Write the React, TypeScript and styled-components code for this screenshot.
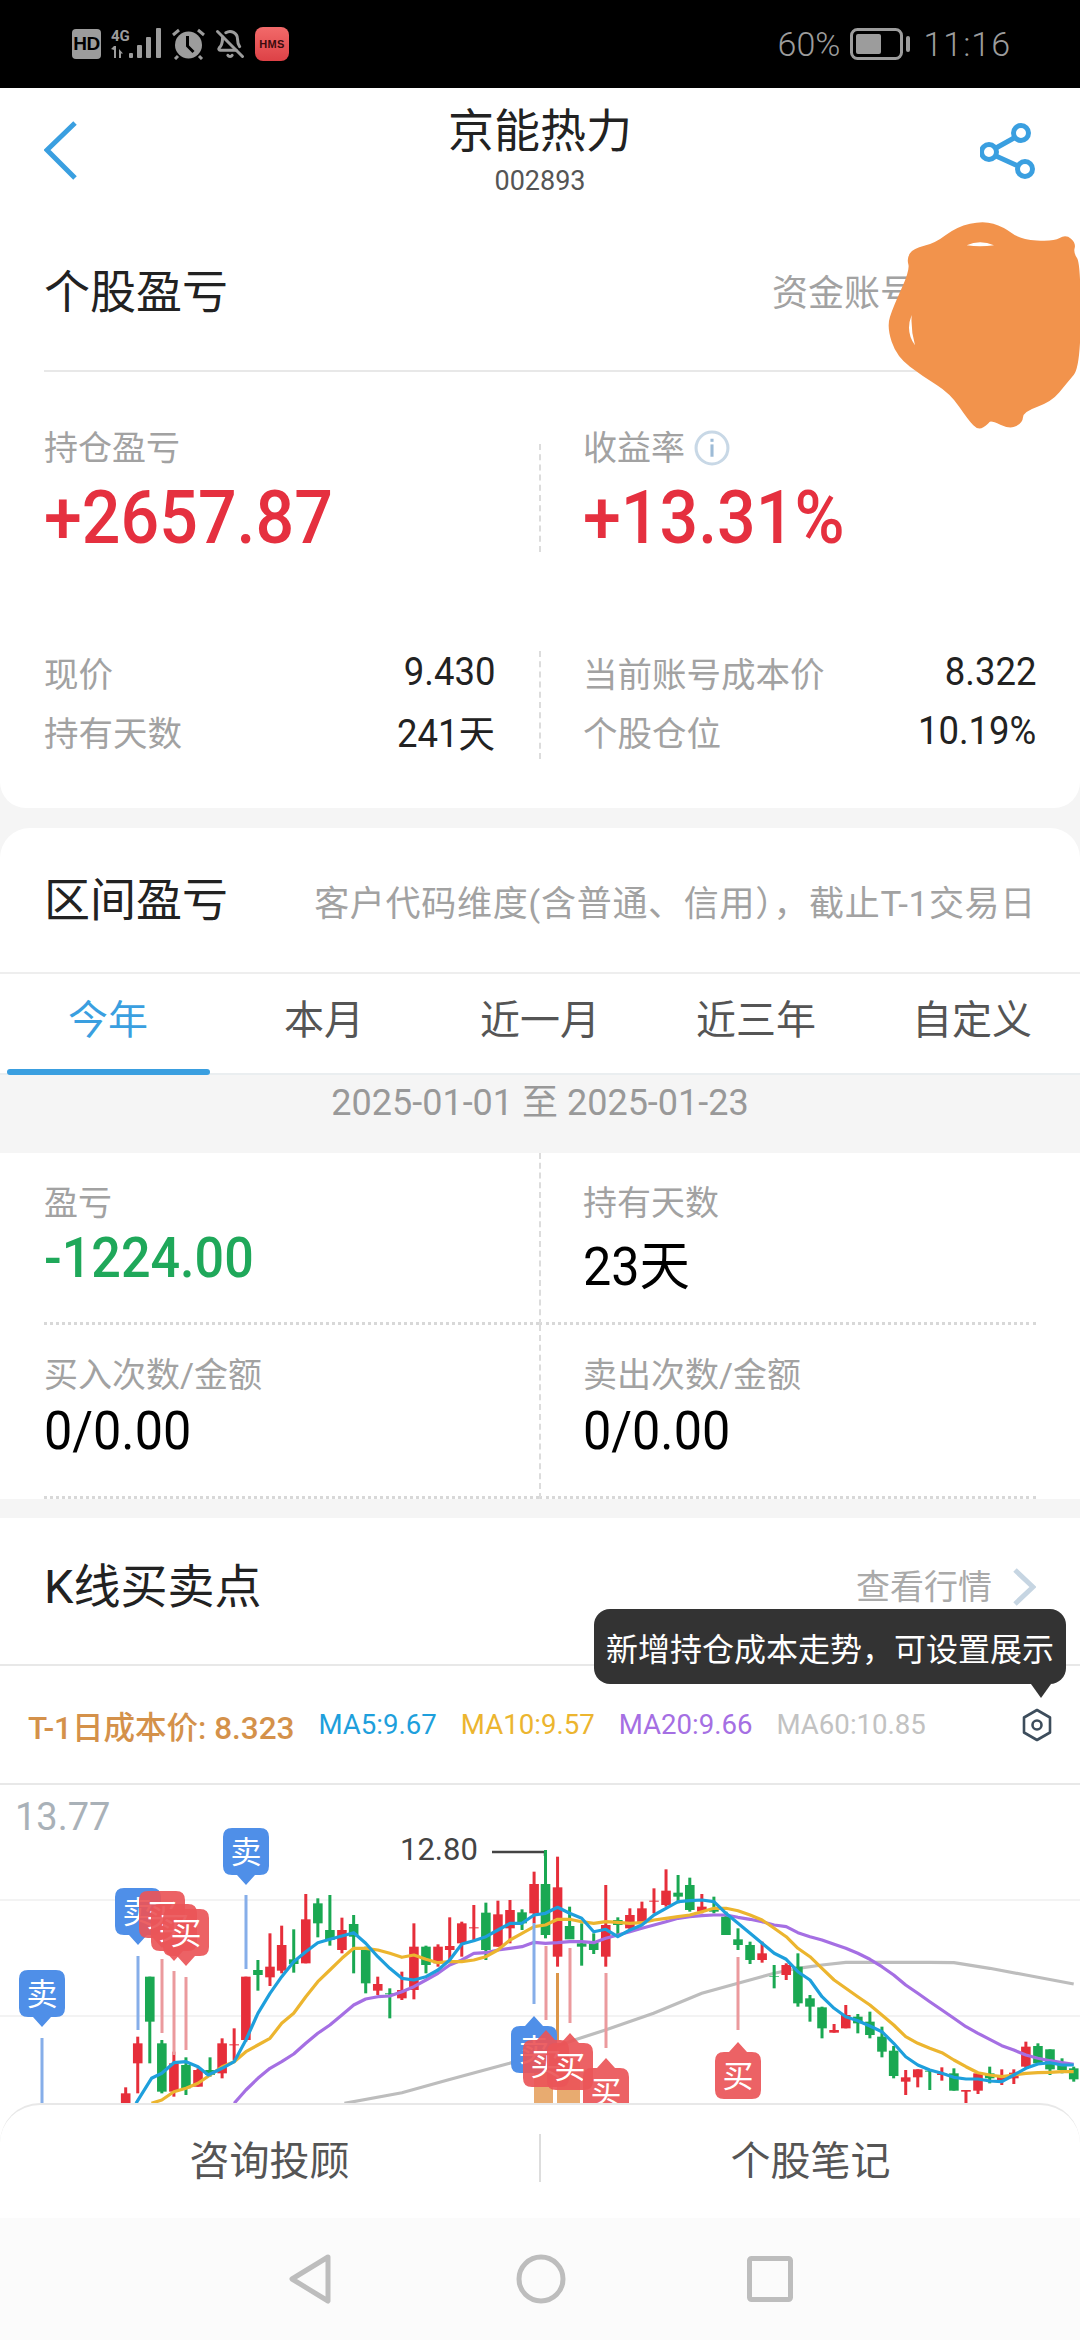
import React from "react";
import styled, { createGlobalStyle } from "styled-components";
import { BellOff } from "lucide-react";

const Global = createGlobalStyle`
  html, body { margin: 0; padding: 0; background: #f5f5f5; }
  body { font-family: Roboto, "Noto Sans CJK SC", sans-serif; }
  * { box-sizing: border-box; }
`;

const BLUE = "#3a9fe0";
const RED = "#e5303f";
const GREEN = "#1fa85a";
const GRAY = "#a2a2a2";

const Screen = styled.div`
  position: relative;
  width: 1080px;
  height: 2340px;
  overflow: hidden;
  background: #f5f5f5;
  display: flex;
  flex-direction: column;
`;

/* status bar */
const StatusBar = styled.div`
  height: 88px;
  flex: none;
  background: #000;
  color: #9c9c9c;
  display: flex;
  align-items: center;
  justify-content: space-between;
  padding: 0 69px 0 72px;
`;
const StatusGroup = styled.div`
  display: flex;
  align-items: center;
  gap: 10px;
`;
const HdBadge = styled.div`
  width: 29px;
  height: 30px;
  border-radius: 4px;
  background: #9c9c9c;
  color: #000;
  font: 800 19px/30px "Liberation Sans", sans-serif;
  text-align: center;
  letter-spacing: -0.5px;
`;
const HmsBadge = styled.div`
  width: 34px;
  height: 34px;
  margin-left: 0;
  border-radius: 8px;
  background: linear-gradient(#f26a6a, #dd4146);
  color: #3a0b0d;
  font: 800 11px/34px "Liberation Sans", sans-serif;
  text-align: center;
  letter-spacing: 0.3px;
`;
const StatusText = styled.span<{ $tight?: boolean }>`
  font-size: 34px;
  font-weight: 300;
  line-height: 40px;
  letter-spacing: ${(p) => (p.$tight ? "0" : "1px")};
`;
const Battery = styled.div`
  display: flex;
  align-items: center;
  gap: 3px;
  margin-right: 3px;
`;

/* top card */
const TopCard = styled.section`
  flex: none;
  height: 720px;
  background: #fff;
  border-radius: 0 0 26px 26px;
`;
const NavHeader = styled.header`
  height: 126px;
  padding: 0 44px;
  display: grid;
  grid-template-columns: 1fr auto 1fr;
  align-items: center;
`;
const ShareSlot = styled.div`
  display: flex;
  justify-content: flex-end;
`;
const TitleBlock = styled.div`
  text-align: center;
`;
const StockName = styled.div`
  font-size: 46px;
  line-height: 50px;
  color: #222;
`;
const StockCode = styled.div`
  margin-top: 10px;
  font-size: 27px;
  line-height: 30px;
  color: #555;
`;
const SectionHead = styled.div`
  height: 158px;
  margin: 0 44px;
  display: flex;
  align-items: center;
  justify-content: space-between;
  border-bottom: 2px solid #e8e8e8;
`;
const SectionTitle = styled.h2<{ $size?: number }>`
  margin: 0;
  font-size: ${(p) => p.$size ?? 46}px;
  font-weight: 400;
  line-height: 50px;
  color: #222;
`;
const AccountLabel = styled.span`
  margin-right: 120px;
  margin-bottom: 4px;
  font-size: 36px;
  color: ${GRAY};
`;
const SplitRow = styled.div<{ $top: number }>`
  margin-top: ${(p) => p.$top}px;
  padding: 0 44px;
  display: grid;
  grid-template-columns: 495px 2px 1fr;
`;
const SplitCell = styled.div<{ $side: "left" | "right" }>`
  ${(p) => (p.$side === "left" ? "padding-right: 44px;" : "padding-left: 42px;")}
`;
const DashLine = styled.div`
  height: 108px;
  margin-top: 16px;
  border-left: 2px dashed #dcdcdc;
`;
const DashLineTight = styled(DashLine)`
  margin-top: 9px;
`;
const StatLabel = styled.div`
  display: flex;
  align-items: center;
  gap: 9px;
  font-size: 34px;
  line-height: 40px;
  color: ${GRAY};
`;
const BigValue = styled.div`
  margin-top: 10px;
  font-size: 74px;
  font-weight: 500;
  line-height: 80px;
  color: ${RED};
  transform: scaleX(0.92);
  transform-origin: left center;
`;
const KvRow = styled.div`
  height: 59px;
  display: flex;
  align-items: center;
  justify-content: space-between;
  font-size: 34.5px;
  color: ${GRAY};
`;
const KvValue = styled.span`
  font-size: 38px;
  color: #222;
  transform: scaleX(0.96);
  transform-origin: right center;
`;

/* range card */
const RangeCard = styled.section`
  flex: none;
  margin-top: 20px;
  background: #fff;
  border-radius: 30px 30px 0 0;
`;
const RangeHead = styled.div`
  height: 144px;
  padding: 0 44px;
  display: flex;
  align-items: center;
  justify-content: space-between;
`;
const RangeNote = styled.span`
  font-size: 35px;
  color: ${GRAY};
  letter-spacing: 0.7px;
`;
const Tabs = styled.nav`
  height: 103px;
  display: grid;
  grid-template-columns: repeat(5, 216px);
  border-top: 2px solid #eee;
  border-bottom: 2px solid #eaeef0;
`;
const Tab = styled.div<{ $active?: boolean }>`
  position: relative;
  padding-top: 22px;
  text-align: center;
  font-size: 40px;
  line-height: 50px;
  color: ${(p) => (p.$active ? BLUE : "#555")};
  ${(p) =>
    p.$active &&
    `&::after {
      content: "";
      position: absolute;
      left: 7px;
      right: 6px;
      bottom: -2px;
      height: 6px;
      border-radius: 3px;
      background: ${BLUE};
    }`}
`;
const DateBar = styled.div`
  height: 78px;
  background: #f5f5f5;
  padding-top: 8px;
  text-align: center;
  font-size: 36px;
  line-height: 40px;
  color: #999;
`;
const MetricGrid = styled.div`
  height: 346px;
  padding: 0 44px;
  display: grid;
  grid-template-columns: 495px 1fr;
  grid-template-rows: 172px 174px;
`;
const MetricCell = styled.div<{ $right?: boolean }>`
  padding-top: 30px;
  border-bottom: 3px dotted #d8d8d8;
  ${(p) => p.$right && "border-left: 2px dashed #dcdcdc; padding-left: 42px;"}
`;
const MetricValue = styled.div<{ $tone?: "down"; $gap: number }>`
  margin-top: ${(p) => p.$gap}px;
  font-size: ${(p) => (p.$tone === "down" ? 56 : 53)}px;
  line-height: 60px;
  font-weight: ${(p) => (p.$tone === "down" ? 500 : 400)};
  color: ${(p) => (p.$tone === "down" ? GREEN : "#000")};
  transform: scaleX(${(p) => (p.$tone === "down" ? 0.93 : 0.95)});
  transform-origin: left center;
`;

/* K line */
const KSection = styled.section`
  position: relative;
  flex: 1;
  min-height: 0;
  margin-top: 19px;
  background: #fff;
  display: flex;
  flex-direction: column;
`;
const KHead = styled.div`
  flex: none;
  height: 148px;
  padding: 44px 44px 0;
  display: flex;
  align-items: flex-start;
  justify-content: space-between;
  border-bottom: 2px solid #e8e8e8;
`;
const KLink = styled.div`
  display: flex;
  align-items: center;
  gap: 20px;
  font-size: 34px;
  line-height: 50px;
  color: #aaa;
`;
const Tooltip = styled.div`
  position: absolute;
  left: 594px;
  top: 91px;
  width: 472px;
  height: 75px;
  border-radius: 16px;
  background: #333;
  color: #fff;
  font-size: 32px;
  white-space: nowrap;
  display: flex;
  align-items: center;
  justify-content: center;
  &::after {
    content: "";
    position: absolute;
    right: 15px;
    bottom: -14px;
    border-left: 10px solid transparent;
    border-right: 10px solid transparent;
    border-top: 14px solid #333;
  }
`;
const Legend = styled.div`
  flex: none;
  height: 119px;
  padding: 0 28px 0 28px;
  display: flex;
  align-items: center;
  gap: 24px;
  border-bottom: 2px solid #e8e8e8;
`;
const LegendItem = styled.span<{ $color: string; $main?: boolean }>`
  color: ${(p) => p.$color};
  font-size: ${(p) => (p.$main ? 31.5 : 27.6)}px;
  font-weight: ${(p) => (p.$main ? 500 : 400)};
  white-space: nowrap;
`;
const LegendGear = styled.div`
  margin-left: auto;
  display: flex;
`;
const ChartSvg = styled.svg`
  display: block;
  flex: none;
`;

/* dock */
const Dock = styled.div`
  position: absolute;
  left: 0;
  right: 0;
  bottom: 0;
  height: 237px;
  display: flex;
  flex-direction: column;
`;
const DockActions = styled.div`
  flex: 1;
  background: #fff;
  border-top: 2px solid #e8e8e8;
  border-radius: 40px 40px 0 0;
  display: grid;
  grid-template-columns: 1fr 2px 1fr;
  align-items: center;
  padding-bottom: 8px;
`;
const DockButton = styled.div`
  text-align: center;
  font-size: 40px;
  color: #555;
`;
const DockDivider = styled.div`
  height: 48px;
  background: #ddd;
`;
const SystemNav = styled.div`
  height: 122px;
  flex: none;
  background: #fbfbfb;
  position: relative;
  display: grid;
  grid-template-columns: 288px 48px 180px 48px 183px 44px 1fr;
  align-items: center;
  padding-bottom: 0;
`;
const NavSpacer = styled.span``;
const Blob = styled.svg`
  position: absolute;
  left: 860px;
  top: 200px;
`;

type Candle = [number, number, number, number, number, "r" | "g"];
const leftCandles: Candle[] = [
  [365, 922, 1020, 940, 1020, "r"], [400, 770, 940, 790, 850, "r"], [435, 590, 850, 590, 725, "g"],
  [470, 780, 940, 790, 935, "g"], [505, 815, 950, 850, 935, "r"], [540, 832, 945, 855, 925, "g"],
  [575, 865, 920, 870, 920, "r"], [610, 832, 890, 870, 885, "g"], [645, 775, 895, 790, 880, "r"],
  [680, 745, 840, 793, 796, "r"], [714, 590, 785, 590, 780, "r"], [749, 540, 632, 570, 585, "g"],
  [784, 460, 618, 560, 592, "r"], [818, 437, 580, 495, 572, "r"], [853, 448, 578, 538, 552, "g"],
  [888, 342, 550, 418, 550, "r"], [923, 355, 472, 370, 430, "g"], [958, 345, 497, 450, 480, "g"],
  [993, 413, 520, 450, 510, "r"], [1027, 405, 580, 432, 470, "g"], [1062, 500, 640, 505, 610, "g"],
  [1097, 590, 645, 612, 632, "r"], [1132, 625, 715, 640, 643, "g"], [1167, 575, 660, 630, 655, "r"],
  [1202, 430, 658, 500, 630, "r"], [1237, 497, 580, 500, 555, "g"], [1272, 493, 560, 500, 550, "r"],
  [1306, 412, 540, 498, 510, "r"], [1341, 425, 530, 430, 490, "r"], [1376, 375, 480, 442, 445, "r"],
  [1411, 368, 540, 398, 510, "g"], [1446, 362, 500, 403, 500, "r"], [1481, 360, 490, 390, 445, "r"],
  [1516, 388, 450, 397, 430, "g"], [1551, 275, 430, 312, 400, "r"],
];
const rightCandles: Candle[] = [
  [16, 210, 475, 312, 465, "g"], [51, 230, 560, 322, 530, "r"], [86, 380, 475, 438, 478, "g"],
  [121, 430, 557, 490, 500, "g"], [156, 460, 522, 487, 510, "g"], [191, 315, 560, 435, 530, "r"],
  [226, 412, 470, 420, 435, "g"], [261, 385, 450, 405, 445, "r"], [296, 365, 430, 385, 430, "r"],
  [331, 325, 400, 362, 365, "r"], [366, 268, 380, 332, 375, "r"], [401, 285, 370, 338, 350, "g"],
  [435, 293, 395, 315, 390, "g"], [470, 342, 400, 380, 395, "r"], [505, 350, 400, 385, 395, "g"],
  [540, 395, 465, 410, 465, "g"], [575, 445, 510, 478, 495, "g"], [610, 485, 552, 495, 540, "g"],
  [645, 485, 548, 520, 540, "r"], [680, 555, 625, 588, 590, "g"], [715, 550, 600, 555, 585, "r"],
  [749, 520, 680, 560, 670, "g"], [784, 645, 725, 655, 680, "g"], [819, 680, 775, 682, 745, "g"],
  [854, 732, 758, 750, 758, "r"], [888, 675, 745, 705, 745, "r"], [923, 702, 760, 710, 730, "g"],
  [958, 695, 775, 725, 765, "g"], [993, 740, 832, 770, 815, "g"], [1027, 798, 895, 812, 888, "g"],
  [1062, 870, 945, 892, 905, "r"], [1097, 868, 922, 868, 892, "r"], [1132, 870, 930, 872, 875, "g"],
  [1167, 862, 902, 880, 885, "r"], [1202, 865, 932, 880, 932, "g"], [1237, 930, 970, 930, 935, "r"],
  [1272, 878, 942, 880, 932, "r"], [1306, 860, 910, 880, 895, "g"], [1341, 868, 915, 890, 900, "r"],
  [1376, 868, 912, 878, 895, "r"], [1411, 785, 865, 800, 860, "r"], [1446, 790, 852, 798, 850, "g"],
  [1481, 808, 885, 808, 868, "g"], [1516, 835, 880, 850, 870, "g"], [1550, 860, 905, 865, 898, "g"],
];

const lx = (x: number) => x / 2.904;
const rx = (x: number) => 540 + x / 2.904;
const zy = (y: number) => 1780 + y / 3;

type Pt = [number, number];
const maLine = (l: Pt[], r: Pt[]) =>
  [...l.map(([x, y]) => `${lx(x).toFixed(1)},${zy(y).toFixed(1)}`), ...r.map(([x, y]) => `${rx(x).toFixed(1)},${zy(y).toFixed(1)}`)].join(" ");

const ma5 = maLine(
  [[395,970],[440,895],[470,880],[505,848],[540,845],[575,860],[605,885],[645,865],[680,845],[714,780],[749,700],[784,640],[818,590],[853,545],[888,515],[923,488],[958,478],[993,468],[1027,458],[1062,490],[1097,530],[1132,565],[1167,595],[1202,600],[1237,590],[1272,570],[1306,540],[1341,492],[1376,482],[1411,470],[1446,450],[1481,430],[1516,430],[1551,405]],
  [[16,400],[51,382],[86,400],[121,415],[156,455],[191,448],[226,470],[261,450],[296,435],[331,405],[366,385],[401,365],[435,362],[470,360],[505,365],[540,400],[575,430],[610,460],[645,490],[680,520],[715,538],[749,575],[784,600],[819,650],[854,685],[888,710],[923,722],[958,738],[993,755],[1027,790],[1062,830],[1097,855],[1132,870],[1167,880],[1202,892],[1237,897],[1272,897],[1306,903],[1341,905],[1376,885],[1411,865],[1446,852],[1481,848],[1516,855],[1550,855]]
);
const ma10 = maLine(
  [[440,970],[470,960],[505,935],[540,925],[575,910],[610,885],[645,860],[680,845],[714,815],[749,795],[784,775],[818,730],[853,700],[888,650],[923,605],[958,570],[993,535],[1027,505],[1062,505],[1097,510],[1132,520],[1167,532],[1202,525],[1237,538],[1272,548],[1306,545],[1341,545],[1376,540],[1411,530],[1446,510],[1481,480],[1516,460],[1551,440]],
  [[16,435],[51,418],[86,418],[121,425],[156,430],[191,425],[226,427],[261,430],[296,428],[331,420],[366,415],[401,410],[435,405],[470,395],[505,385],[540,385],[575,392],[610,405],[645,420],[680,445],[715,470],[749,505],[784,530],[819,565],[854,600],[888,625],[923,650],[958,675],[993,705],[1027,735],[1062,770],[1097,790],[1132,805],[1167,818],[1202,840],[1237,860],[1272,878],[1306,885],[1341,890],[1376,885],[1411,880],[1446,878],[1481,877],[1516,875],[1550,875]]
);
const ma20 = maLine(
  [[680,970],[714,930],[749,895],[784,865],[818,845],[853,822],[888,790],[923,760],[958,735],[993,705],[1027,675],[1062,657],[1097,650],[1132,648],[1167,635],[1202,620],[1237,600],[1272,580],[1306,555],[1341,540],[1376,520],[1411,518],[1446,510],[1481,505],[1516,500],[1551,487]],
  [[16,490],[51,488],[86,485],[121,485],[156,488],[191,475],[226,465],[261,455],[296,445],[331,435],[366,425],[401,415],[435,410],[470,407],[505,405],[540,405],[575,412],[610,418],[645,425],[680,435],[715,440],[749,458],[784,470],[819,480],[854,493],[888,505],[923,520],[958,538],[993,560],[1027,585],[1062,615],[1097,640],[1132,665],[1167,690],[1202,715],[1237,740],[1272,760],[1306,778],[1341,797],[1376,810],[1411,825],[1446,835],[1481,842],[1516,848],[1550,853]]
);
const ma60 = maLine(
  [[1000,970],[1167,938],[1300,900],[1480,850]],
  [[100,780],[190,750],[330,700],[470,640],[575,610],[680,580],[749,565],[819,555],[888,547],[1027,547],[1132,547],[1202,548],[1306,565],[1411,585],[1550,612]]
);

const CandleMark = ({ c, toX }: { c: Candle; toX: (x: number) => number }) => {
  const [x, wt, wb, bt, bb, tone] = c;
  const cx = toX(x);
  const fill = tone === "r" ? "#e62e3a" : "#1aa852";
  return (
    <g fill={fill}>
      <rect x={cx - 1.5} y={zy(wt)} width={3} height={(wb - wt) / 3} />
      <rect x={cx - 4.8} y={zy(bt)} width={9.6} height={(bb - bt) / 3} />
    </g>
  );
};

type PinProps = { x: number; top: number; kind: "buy" | "sell"; dir: "down" | "up"; lineA: number; lineB: number };
const Pin = ({ x, top, kind, dir, lineA, lineB }: PinProps) => {
  const fill = kind === "sell" ? "#4f8fe8" : "#ea5558";
  const line = kind === "sell" ? "#86aee9" : "#eb9a9d";
  const w = 23;
  const h = 47;
  const r = 9;
  const t = 10;
  const bot = top + h;
  const d =
    dir === "down"
      ? `M${x - w + r} ${top}H${x + w - r}Q${x + w} ${top} ${x + w} ${top + r}V${bot - r}Q${x + w} ${bot} ${x + w - r} ${bot}H${x + 9}L${x} ${bot + t}L${x - 9} ${bot}H${x - w + r}Q${x - w} ${bot} ${x - w} ${bot - r}V${top + r}Q${x - w} ${top} ${x - w + r} ${top}Z`
      : `M${x} ${top - t}L${x + 9} ${top}H${x + w - r}Q${x + w} ${top} ${x + w} ${top + r}V${bot - r}Q${x + w} ${bot} ${x + w - r} ${bot}H${x - w + r}Q${x - w} ${bot} ${x - w} ${bot - r}V${top + r}Q${x - w} ${top} ${x - w + r} ${top}H${x - 9}Z`;
  return (
    <g>
      <rect x={x - 1.5} y={lineA} width={3} height={lineB - lineA} fill={line} />
      <path d={d} fill={fill} fillOpacity={kind === "sell" ? 1 : 0.92} />
      <text x={x} y={top + 35} textAnchor="middle" fontSize={31} fill="#fff" fontFamily='"Noto Sans CJK SC", sans-serif'>
        {kind === "sell" ? "卖" : "买"}
      </text>
    </g>
  );
};

const blobPts: Pt[] = [
  [370,62],[430,80],[480,118],[580,125],[618,103],[648,130],[640,158],[662,190],[662,500],[620,550],[575,605],[490,635],[488,668],[450,688],[392,660],[385,672],[355,692],[325,660],[270,580],[190,530],[110,470],[80,380],[100,320],[150,210],[140,175],[160,145],[225,130],[290,80],
];
const smooth = (p: Pt[]) => {
  const mid = (a: Pt, b: Pt): Pt => [(a[0] + b[0]) / 2, (a[1] + b[1]) / 2];
  const start = mid(p[p.length - 1], p[0]);
  let d = `M${start[0]} ${start[1]}`;
  p.forEach((pt, i) => {
    const m = mid(pt, p[(i + 1) % p.length]);
    d += `Q${pt[0]} ${pt[1]} ${m[0]} ${m[1]}`;
  });
  return d + "Z";
};
const blobPath =
  smooth(blobPts) +
  "M320 136Q360 118 402 136Q360 142 320 136Z" +
  "M155 345Q135 395 165 436Q152 390 155 345Z";

const tabs = ["今年", "本月", "近一月", "近三年", "自定义"];

const BackIcon = () => (
  <svg width="34" height="60" viewBox="0 0 34 60" fill="none">
    <path d="M31 2 3 29l28 28" stroke={BLUE} strokeWidth="5" />
  </svg>
);
const ShareIcon = () => (
  <svg width="56" height="56" viewBox="980 123 56 56" fill="none" stroke={BLUE} strokeWidth="5">
    <circle cx="1021" cy="133" r="7.5" />
    <circle cx="989" cy="152" r="7.5" />
    <circle cx="1025" cy="169" r="7.5" />
    <path d="M1014 138 996 148M996 156l22 10" />
  </svg>
);
const InfoIcon = () => (
  <svg width="36" height="36" viewBox="0 0 35 35" fill="none">
    <circle cx="17.5" cy="17.5" r="15.5" stroke="#c8d8e6" strokeWidth="3" />
    <rect x="16" y="14" width="3" height="12" fill="#9dbbd6" />
    <rect x="16" y="8.5" width="3" height="3" fill="#9dbbd6" />
  </svg>
);
const SignalIcon = () => (
  <svg width="51" height="32" viewBox="0 0 51 32" fill="#9c9c9c">
    <text x="0" y="13" fontSize="15" fontWeight="700" fontFamily="Roboto, sans-serif">4G</text>
    <path d="M3 18h2v12H3zM0 21l3-3v4zM8 30v-9l4 4.500-2 0v4.500z" />
    <rect x="18" y="25" width="4" height="5" rx="1" />
    <rect x="26" y="17" width="5" height="13" rx="1" />
    <rect x="35" y="9" width="5" height="21" rx="1" />
    <rect x="45" y="0" width="5" height="30" rx="1" />
  </svg>
);
const AlarmIcon = () => (
  <svg width="33" height="32" viewBox="0 0 33 32" fill="none">
    <circle cx="16.500" cy="17" r="13.500" fill="#9c9c9c" />
    <path d="M15.500 8v10l6 6" stroke="#000" strokeWidth="3" />
    <path d="M1 7 7 2M32 7l-6-5M6 28l-3 3M27 28l3 3" stroke="#9c9c9c" strokeWidth="3" />
  </svg>
);
const BatteryIcon = () => (
  <Battery>
    <svg width="53" height="32" viewBox="0 0 53 32" fill="none">
      <rect x="1.500" y="1.500" width="50" height="29" rx="6" stroke="#9c9c9c" strokeWidth="3" />
      <rect x="6" y="6" width="25" height="20" rx="2" fill="#9c9c9c" />
    </svg>
    <svg width="4" height="16" viewBox="0 0 4 16"><rect width="4" height="16" rx="2" fill="#9c9c9c" /></svg>
  </Battery>
);
const GearIcon = () => (
  <svg width="30" height="34" viewBox="0 0 30 34" fill="none" stroke="#3d4d5c" strokeWidth="2.600">
    <path d="M15 2 28 9.500v15L15 32 2 24.500v-15z" strokeLinejoin="round" />
    <circle cx="15" cy="17" r="4.500" />
  </svg>
);

const Chart = () => (
  <ChartSvg width="1080" height="318" viewBox="0 1785 1080 318">
    <rect x="0" y="1899" width="1080" height="2" fill="#f3f3f3" />
    <rect x="0" y="2015" width="1080" height="2" fill="#f3f3f3" />
    <text x="15" y="1830" fontSize="38" fill="#a9b1b8" fontFamily="Roboto, sans-serif">13.77</text>
    <text x="400" y="1860" fontSize="31" fill="#444" fontFamily="Roboto, sans-serif">12.80</text>
    <polyline points="492,1852 545,1852 545,1856" fill="none" stroke="#444" strokeWidth="2.500" />
    <polyline points={ma60} fill="none" stroke="#bdbdbd" strokeWidth="3.200" />
    {leftCandles.map((c) => <CandleMark key={`l${c[0]}`} c={c} toX={lx} />)}
    {rightCandles.map((c) => <CandleMark key={`r${c[0]}`} c={c} toX={rx} />)}
    <polyline points={ma20} fill="none" stroke="#a56fe3" strokeWidth="3.200" strokeLinejoin="round" />
    <polyline points={ma10} fill="none" stroke="#ecb52f" strokeWidth="3.200" strokeLinejoin="round" />
    <polyline points={ma5} fill="none" stroke="#1e9fdc" strokeWidth="3.200" strokeLinejoin="round" />

    <Pin x={42} top={1970} kind="sell" dir="down" lineA={2038} lineB={2103} />
    <Pin x={138} top={1888} kind="sell" dir="down" lineA={1956} lineB={2030} />
    <Pin x={246} top={1828} kind="sell" dir="down" lineA={1895} lineB={1969} />
    <Pin x={162} top={1891} kind="buy" dir="down" lineA={1959} lineB={2033} />
    <Pin x={174} top={1904} kind="buy" dir="down" lineA={1971} lineB={2055} />
    <Pin x={186} top={1909} kind="buy" dir="down" lineA={1977} lineB={2050} />

    <rect x="534" y="2060" width="19" height="43" fill="#e8ab70" />
    <rect x="557" y="2060" width="23" height="43" fill="#e8ab70" />
    <rect x="556" y="1973" width="3" height="67" fill="#dc9649" />
    <Pin x={534} top={2026} kind="sell" dir="up" lineA={1923} lineB={2004} />
    <Pin x={546} top={2040} kind="buy" dir="up" lineA={1946} lineB={2020} />
    <Pin x={570} top={2043} kind="buy" dir="up" lineA={1948} lineB={2023} />
    <Pin x={606} top={2068} kind="buy" dir="up" lineA={1973} lineB={2048} />
    <Pin x={738} top={2052} kind="buy" dir="up" lineA={1957} lineB={2030} />
  </ChartSvg>
);

export default function App() {
  return (
    <Screen>
      <Global />
      <StatusBar>
        <StatusGroup>
          <HdBadge>HD</HdBadge>
          <SignalIcon />
          <AlarmIcon />
          <BellOff size={30} color="#9c9c9c" strokeWidth={2.4} />
          <HmsBadge>HMS</HmsBadge>
        </StatusGroup>
        <StatusGroup>
          <StatusText $tight>60%</StatusText>
          <BatteryIcon />
          <StatusText>11:16</StatusText>
        </StatusGroup>
      </StatusBar>

      <TopCard>
        <NavHeader>
          <BackIcon />
          <TitleBlock>
            <StockName>京能热力</StockName>
            <StockCode>002893</StockCode>
          </TitleBlock>
          <ShareSlot><ShareIcon /></ShareSlot>
        </NavHeader>
        <SectionHead>
          <SectionTitle>个股盈亏</SectionTitle>
          <AccountLabel>资金账号</AccountLabel>
        </SectionHead>
        <SplitRow $top={56}>
          <SplitCell $side="left">
            <StatLabel>持仓盈亏</StatLabel>
            <BigValue>+2657.87</BigValue>
          </SplitCell>
          <DashLine />
          <SplitCell $side="right">
            <StatLabel>收益率<InfoIcon /></StatLabel>
            <BigValue>+13.31%</BigValue>
          </SplitCell>
        </SplitRow>
        <SplitRow $top={84}>
          <SplitCell $side="left">
            <KvRow>现价<KvValue>9.430</KvValue></KvRow>
            <KvRow>持有天数<KvValue>241天</KvValue></KvRow>
          </SplitCell>
          <DashLineTight />
          <SplitCell $side="right">
            <KvRow>当前账号成本价<KvValue>8.322</KvValue></KvRow>
            <KvRow>个股仓位<KvValue>10.19%</KvValue></KvRow>
          </SplitCell>
        </SplitRow>
      </TopCard>

      <RangeCard>
        <RangeHead>
          <SectionTitle>区间盈亏</SectionTitle>
          <RangeNote>客户代码维度(含普通、信用），截止T-1交易日</RangeNote>
        </RangeHead>
        <Tabs>
          {tabs.map((t, i) => <Tab key={t} $active={i === 0}>{t}</Tab>)}
        </Tabs>
        <DateBar>2025-01-01 至 2025-01-23</DateBar>
        <MetricGrid>
          <MetricCell>
            <StatLabel>盈亏</StatLabel>
            <MetricValue $tone="down" $gap={5}>-1224.00</MetricValue>
          </MetricCell>
          <MetricCell $right>
            <StatLabel>持有天数</StatLabel>
            <MetricValue $gap={14}>23天</MetricValue>
          </MetricCell>
          <MetricCell>
            <StatLabel>买入次数/金额</StatLabel>
            <MetricValue $gap={6}>0/0.00</MetricValue>
          </MetricCell>
          <MetricCell $right>
            <StatLabel>卖出次数/金额</StatLabel>
            <MetricValue $gap={6}>0/0.00</MetricValue>
          </MetricCell>
        </MetricGrid>
      </RangeCard>

      <KSection>
        <KHead>
          <SectionTitle $size={47}>K线买卖点</SectionTitle>
          <KLink>
            查看行情
            <svg width="24" height="38" viewBox="0 0 24 38" fill="none">
              <path d="M3 2 21 19 3 36" stroke="#c6d5e2" strokeWidth="5" />
            </svg>
          </KLink>
        </KHead>
        <Tooltip>新增持仓成本走势，可设置展示</Tooltip>
        <Legend>
          <LegendItem $color="#d4914a" $main>T-1日成本价: 8.323</LegendItem>
          <LegendItem $color="#1e9fdc">MA5:9.67</LegendItem>
          <LegendItem $color="#ecb52f">MA10:9.57</LegendItem>
          <LegendItem $color="#a56fe3">MA20:9.66</LegendItem>
          <LegendItem $color="#c2c2c2">MA60:10.85</LegendItem>
          <LegendGear><GearIcon /></LegendGear>
        </Legend>
        <Chart />
      </KSection>

      <Dock>
        <DockActions>
          <DockButton>咨询投顾</DockButton>
          <DockDivider />
          <DockButton>个股笔记</DockButton>
        </DockActions>
        <SystemNav>
          <NavSpacer />
          <svg width="44" height="50" viewBox="0 0 44 50" fill="none">
            <path d="M40 3 4 25l36 22z" stroke="#bdbdbd" strokeWidth="5" strokeLinejoin="round" />
          </svg>
          <NavSpacer />
          <svg width="50" height="50" viewBox="0 0 50 50" fill="none">
            <circle cx="25" cy="25" r="22" stroke="#bdbdbd" strokeWidth="5" />
          </svg>
          <NavSpacer />
          <svg width="46" height="46" viewBox="0 0 46 46" fill="none">
            <rect x="2.500" y="2.500" width="41" height="41" rx="2" stroke="#bdbdbd" strokeWidth="5" />
          </svg>
          <NavSpacer />
        </SystemNav>
      </Dock>

      <Blob width="220" height="240" viewBox="0 0 660 720">
        <path d={blobPath} fill="#f2934c" fillRule="evenodd" />
      </Blob>
    </Screen>
  );
}
